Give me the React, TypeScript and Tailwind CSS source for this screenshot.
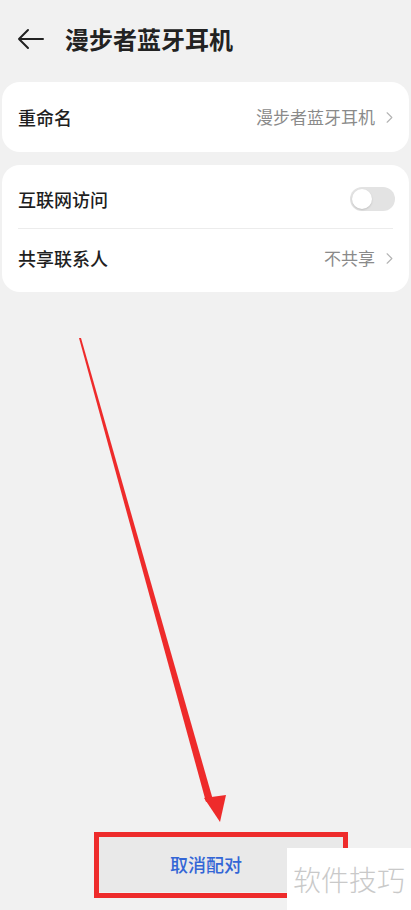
import { ChevronRight } from "lucide-react";

const font = { fontFamily: '"Noto Sans CJK SC", "Noto Sans", sans-serif' };

function Row({ label, value }: { label: string; value?: string }) {
  return (
    <div className="flex h-[58px] items-center justify-between pl-[16px] pr-[10px]">
      <span className="text-[18px] font-medium text-[#1f1f1f]">{label}</span>
      {value != null && (
        <span className="flex items-center gap-[5px] text-[17px] text-[#8a8a8a]">
          {value}
          <ChevronRight className="h-[19px] w-[19px] text-[#b3b3b3]" strokeWidth={1.4} />
        </span>
      )}
    </div>
  );
}

function Toggle() {
  return (
    <div className="flex h-[24px] w-[45px] items-center rounded-full bg-[#e3e3e3] px-[2px]">
      <div className="h-[20px] w-[20px] rounded-full bg-white shadow-[0_1px_2px_rgba(0,0,0,0.15)]" />
    </div>
  );
}

export default function App() {
  return (
    <div className="relative flex h-[910px] w-[411px] flex-col overflow-hidden bg-[#f1f1f1]" style={font}>
      <header className="flex h-[82px] items-center gap-[20px] pb-[4px] pl-[17px]">
        <svg width="28" height="22" viewBox="0 0 28 22" fill="none" stroke="#222" strokeWidth="2" strokeLinecap="round" strokeLinejoin="round">
          <path d="M26 11H2M11 2L2 11l9 9" />
        </svg>
        <h1 className="text-[24px] font-bold text-[#222]">漫步者蓝牙耳机</h1>
      </header>

      <section className="mx-[2px] rounded-[18px] bg-white py-[6px]">
        <Row label="重命名" value="漫步者蓝牙耳机" />
      </section>

      <section className="mx-[2px] mt-[13px] rounded-[18px] bg-white py-[5px]">
        <div className="flex h-[58px] items-center justify-between pl-[16px] pr-[14px]">
          <span className="text-[18px] font-medium text-[#1f1f1f]">互联网访问</span>
          <Toggle />
        </div>
        <div className="mx-[16px] h-px bg-[#ececec]" />
        <Row label="共享联系人" value="不共享" />
      </section>

      <div className="flex-1" />

      <div className="mb-[18px] flex pl-[99px]">
        <button className="h-[55px] w-[244px] bg-[#e9e9e9] pr-[30px] text-[18px] font-medium text-[#3366d6]">
          取消配对
        </button>
      </div>

      {/* annotation: arrow pointing at the button */}
      <svg className="pointer-events-none absolute left-0 top-0" width="411" height="910" viewBox="0 0 411 910">
        <polygon points="79,338 81,338 213,800 206,802" fill="#ee2b2b" />
        <polygon points="204,798 226,795 220,822" fill="#ee2b2b" />
      </svg>
      <div className="pointer-events-none absolute left-[94px] top-[832px] h-[66px] w-[254px] border-[5px] border-[#ee2b2b]" />

      {/* watermark */}
      <div className="absolute bottom-0 right-0 flex h-[62px] w-[124px] items-center justify-center bg-white">
        <span className="text-[28px] font-light text-[#c9c9c9]">软件技巧</span>
      </div>
    </div>
  );
}
